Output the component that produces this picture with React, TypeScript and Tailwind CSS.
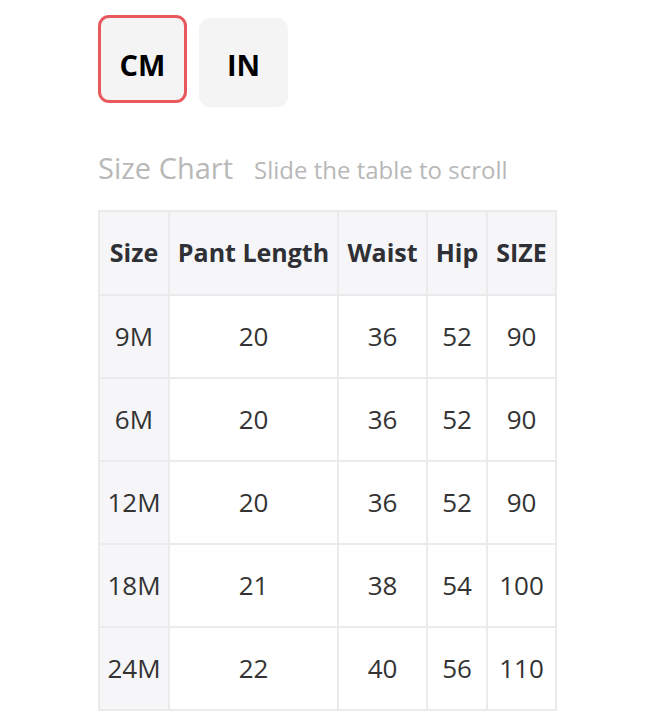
const headers = ['Size', 'Pant Length', 'Waist', 'Hip', 'SIZE'];
const widths = ['w-[70px]', 'w-[169px]', 'w-[89px]', 'w-[60px]', 'w-[69px]'];

const rows = [
  ['9M', '20', '36', '52', '90'],
  ['6M', '20', '36', '52', '90'],
  ['12M', '20', '36', '52', '90'],
  ['18M', '21', '38', '54', '100'],
  ['24M', '22', '40', '56', '110'],
];

export default function App() {
  return (
    <div
      className="w-[646px] h-[728px] bg-white overflow-hidden pl-[98px] pt-[15px]"
      style={{ fontFamily: '"Open Sans", sans-serif' }}
    >
      {/* Unit toggle */}
      <div className="flex items-start gap-[12px]">
        <button className="w-[89px] h-[88px] pt-[12px] rounded-[11px] border-[3px] border-[#e8585c] bg-[#f4f4f5] flex items-center justify-center text-[29px] font-bold text-black">
          CM
        </button>
        <button className="mt-[3px] w-[89px] h-[89px] pt-[4px] rounded-[11px] bg-[#f4f4f5] flex items-center justify-center text-[29px] font-bold text-black">
          IN
        </button>
      </div>

      {/* Title */}
      <div className="mt-[46px] flex items-baseline gap-[21px] text-[#b8b8b8]">
        <span className="text-[29px] leading-none">Size Chart</span>
        <span className="text-[24px] leading-none">Slide the table to scroll</span>
      </div>

      {/* Table */}
      <table className="mt-[28px] table-fixed border-collapse text-[#333]">
        <thead>
          <tr className="h-[84px] bg-[#f6f6f8]">
            {headers.map((h, i) => (
              <th
                key={h}
                className={`${widths[i]} border-2 border-[#ebebeb] text-[25px] font-bold text-[#2f3035] text-center p-0`}
              >
                {h}
              </th>
            ))}
          </tr>
        </thead>
        <tbody>
          {rows.map((r) => (
            <tr key={r[0]} className="h-[83px]">
              {r.map((c, i) => (
                <td
                  key={i}
                  className={`border-2 border-[#ebebeb] text-[26px] text-center p-0 ${i === 0 ? 'bg-[#f6f6f8]' : 'bg-white'}`}
                >
                  {c}
                </td>
              ))}
            </tr>
          ))}
        </tbody>
      </table>
    </div>
  );
}
